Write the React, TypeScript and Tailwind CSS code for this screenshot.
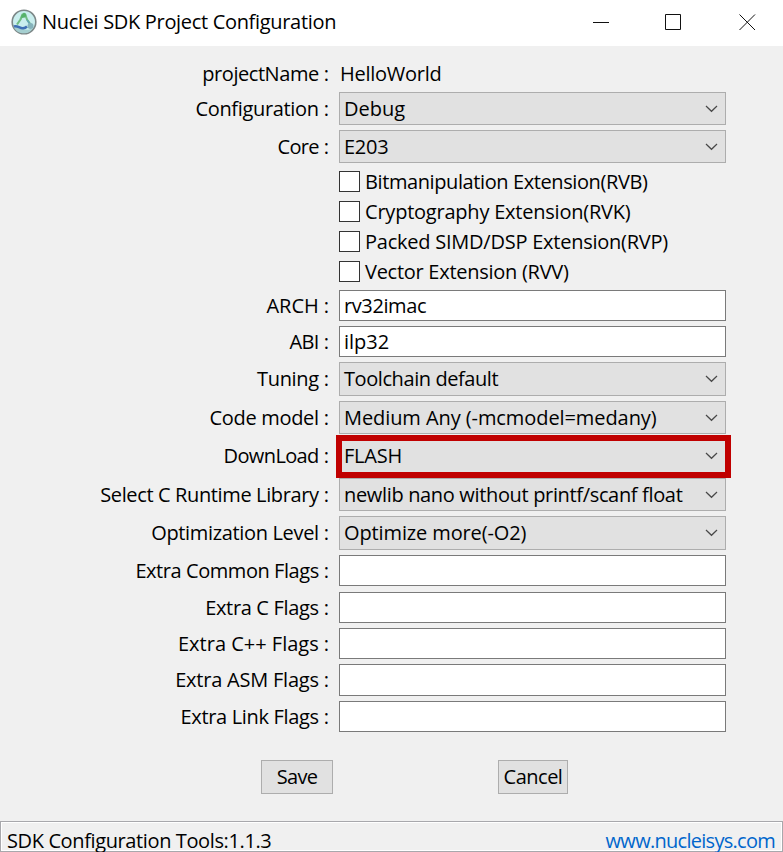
import type { ReactNode } from "react";

function Chevron() {
  return (
    <svg className="mr-[7px] h-[8px] w-[13px] shrink-0" viewBox="0 0 13 8" fill="none">
      <path d="M1 1L6.5 6.3L12 1" stroke="#484848" strokeWidth="1.2" />
    </svg>
  );
}

function Row({ label, className, tracking, children }: { label: string; className: string; tracking: string; children: ReactNode }) {
  return (
    <div className={`flex ${className}`}>
      <div className="flex w-[339px] shrink-0 items-center justify-end pr-[10px]">
        <span className={tracking}>{label}</span>
        <span className="pl-[5px]">:</span>
      </div>
      {children}
    </div>
  );
}

function Select({ value, tracking = "" }: { value: string; tracking?: string }) {
  return (
    <div className="flex w-[387px] items-center justify-between border border-[#adadad] bg-[#e1e1e1] pl-1">
      <span className={tracking}>{value}</span>
      <Chevron />
    </div>
  );
}

function Field({ value = "", tracking = "" }: { value?: string; tracking?: string }) {
  return (
    <div className="flex w-[387px] items-center border border-[#7a7a7a] bg-white pl-1">
      <span className={tracking}>{value}</span>
    </div>
  );
}

function Check({ label, className, tracking }: { label: string; className: string; tracking: string }) {
  return (
    <div className={`ml-[339px] flex h-[21px] items-center gap-[5px] ${className}`}>
      <div className="size-[21px] shrink-0 border border-[#333] bg-white" />
      <span className={tracking}>{label}</span>
    </div>
  );
}

function Logo() {
  return (
    <svg className="size-[26px]" viewBox="0 0 26 26" fill="none">
      <circle cx="13" cy="13" r="11.8" fill="#c9eeee" stroke="#7c8787" strokeWidth="1.6" />
      <path d="M2.5 17.5C6 15.5 9 17.5 12 19.5C15 21.5 18 21 22 19C19.5 23 16 24.3 13 24.3C8 24.3 4 21.5 2.5 17.5Z" fill="#a5cfd0" />
      <path d="M3 17.5C6.5 16 8.5 19.5 12 19.3C14 19.2 15 18.5 16 17.5" stroke="#3f70b5" strokeWidth="2.5" />
      <path d="M6 15.5L9.5 10.5L11.5 5.5L14 5L16 10.5L20 16" stroke="#6fbd82" strokeWidth="2.1" strokeLinejoin="round" />
      <path d="M10 7L13 3.5L15.5 6L14 8.5L10.5 9Z" fill="#55b36a" />
      <path d="M16 11L19.5 16" stroke="#63a5b5" strokeWidth="1.5" />
      <circle cx="19.5" cy="17" r="3" fill="#85b3bb" />
    </svg>
  );
}

export default function App() {
  return (
    <div className="flex h-[852px] w-[783px] flex-col overflow-hidden bg-[#f0f0f0] font-['Open_Sans','Noto_Sans',sans-serif] text-[20px] leading-none whitespace-nowrap text-black">
      <header className="flex h-[46px] shrink-0 items-center bg-white pb-[2px] pl-[11px]">
        <Logo />
        <span className="ml-[5px] tracking-[-0.32px]">Nuclei SDK Project Configuration</span>
        <svg className="ml-auto mr-[27px] h-[18px] w-[163px]" viewBox="0 0 163 18" fill="none" stroke="#111">
          <path d="M0 9.5H16" />
          <path d="M72.5 1.5H87.5V16.5H72.5Z" />
          <path d="M146.5 1.5L162 17M162 1.5L146.5 17" />
        </svg>
      </header>
      <main className="flex flex-col">
        <Row label="projectName" className="mt-[11px] h-[33px]" tracking="tracking-[-0.45px]">
          <div className="flex items-center pl-px tracking-[-0.25px]">HelloWorld</div>
        </Row>
        <Row label="Configuration" className="mt-[2px] h-[33px]" tracking="tracking-[-0.33px]"><Select value="Debug" /></Row>
        <Row label="Core" className="mt-[5px] h-[33px]" tracking="tracking-[-0.7px]"><Select value="E203" tracking="tracking-[-0.25px]" /></Row>
        <Check label="Bitmanipulation Extension(RVB)" className="mt-[8px]" tracking="tracking-[-0.4px]" />
        <Check label="Cryptography Extension(RVK)" className="mt-[9px]" tracking="tracking-[-0.22px]" />
        <Check label="Packed SIMD/DSP Extension(RVP)" className="mt-[9px]" tracking="tracking-[-0.24px]" />
        <Check label="Vector Extension (RVV)" className="mt-[9px]" tracking="tracking-[-0.27px]" />
        <Row label="ARCH" className="mt-[8px] h-[31px]" tracking=""><Field value="rv32imac" tracking="tracking-[-0.4px]" /></Row>
        <Row label="ABI" className="mt-[5px] h-[31px]" tracking="tracking-[-0.6px]"><Field value="ilp32" /></Row>
        <Row label="Tuning" className="mt-[5px] h-[34px]" tracking="tracking-[-0.35px]"><Select value="Toolchain default" tracking="tracking-[-0.42px]" /></Row>
        <Row label="Code model" className="mt-[5px] h-[33px]" tracking="tracking-[-0.32px]"><Select value="Medium Any (-mcmodel=medany)" tracking="tracking-[-0.08px]" /></Row>
        <div className="relative mt-[5px]">
          <Row label="DownLoad" className="h-[34px]" tracking="tracking-[-0.62px]"><Select value="FLASH" tracking="tracking-[-0.2px]" /></Row>
          <div className="absolute -top-[4px] left-[336px] h-[43px] w-[395px] border-6 border-[#c00000]" />
        </div>
        <Row label="Select C Runtime Library" className="mt-[5px] h-[33px]" tracking="tracking-[-0.37px]"><Select value="newlib nano without printf/scanf float" tracking="tracking-[-0.34px]" /></Row>
        <Row label="Optimization Level" className="mt-[5px] h-[34px]" tracking="tracking-[-0.34px]"><Select value="Optimize more(-O2)" tracking="tracking-[-0.12px]" /></Row>
        <Row label="Extra Common Flags" className="mt-[5px] h-[31px]" tracking="tracking-[-0.44px]"><Field /></Row>
        <Row label="Extra C Flags" className="mt-[6px] h-[31px]" tracking="tracking-[-0.33px]"><Field /></Row>
        <Row label="Extra C++ Flags" className="mt-[5px] h-[31px]" tracking=""><Field /></Row>
        <Row label="Extra ASM Flags" className="mt-[5px] h-[32px]" tracking="tracking-[-0.22px]"><Field /></Row>
        <Row label="Extra Link Flags" className="mt-[5px] h-[31px]" tracking="tracking-[-0.33px]"><Field /></Row>
        <div className="mt-[28px] flex h-[34px] gap-[165px] pl-[261px]">
          <button className="w-[72px] border border-[#adadad] bg-[#e1e1e1] tracking-[-0.7px]">Save</button>
          <button className="w-[70px] border border-[#adadad] bg-[#e1e1e1] tracking-[-0.5px]">Cancel</button>
        </div>
      </main>
      <footer className="mt-auto h-[31px] border border-[#a8a8ac]">
        <div className="flex h-[29px] items-end justify-between border border-white pr-[6px] pl-[5px]">
          <span className="-mb-px tracking-[-0.38px]">SDK Configuration Tools:1.1.3</span>
          <span className="-mb-px tracking-[-0.72px] text-[#0066cc]">www.nucleisys.com</span>
        </div>
      </footer>
    </div>
  );
}
